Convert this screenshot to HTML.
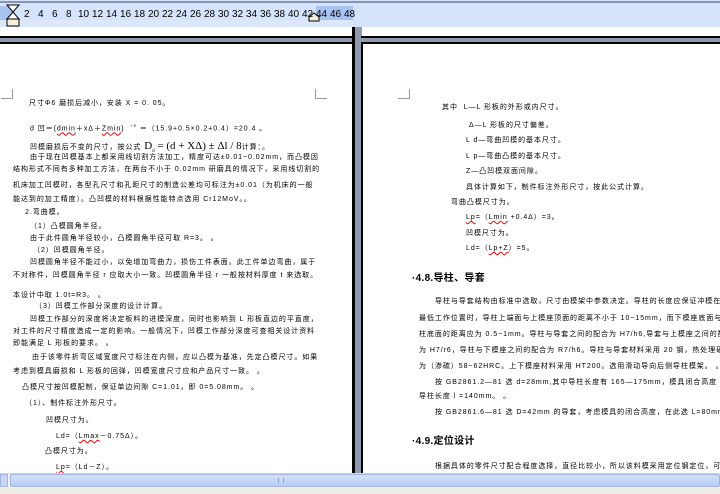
<!DOCTYPE html>
<html><head><meta charset="utf-8"><style>
*{margin:0;padding:0;box-sizing:border-box}
body{width:720px;height:494px;overflow:hidden;background:#8e99b0;position:relative;font-family:"Liberation Sans","Noto Sans CJK SC",sans-serif}
.a{position:absolute}
.t{position:absolute;font-size:7px;line-height:8px;white-space:nowrap;color:#000;font-family:"Liberation Sans","Noto Sans CJK SC",sans-serif;letter-spacing:0.95px}
.h{position:absolute;font-size:10px;font-weight:bold;white-space:nowrap;color:#000;font-family:"Liberation Sans","Noto Sans CJK SC",sans-serif;letter-spacing:0.3px}
.r{position:absolute;top:9px;font-size:10px;color:#000;font-family:"Liberation Sans",sans-serif}
u{text-decoration:underline wavy red;text-decoration-thickness:1px}
</style></head><body>
<!-- top chrome -->
<div class="a" style="left:0;top:0;width:720px;height:27px;background:#d6e4fb"></div>
<div class="a" style="left:0;top:1px;width:720px;height:2px;background:#8795b2"></div>
<div class="a" style="left:0;top:6px;width:12px;height:14px;background:#a9c3f0"></div>
<div class="a" style="left:316px;top:6px;width:37px;height:14px;background:#a9c3f0"></div>
<div class="a" style="left:0;top:20px;width:353px;height:6px;background:#dce7fb"></div>
<svg class="a" style="left:6px;top:4px" width="14" height="24"><path d="M1 1h12L7 8ZM1 15L7 8l6 7Z" fill="#fff" stroke="#000"/><rect x="1" y="15" width="12" height="7" fill="#f3efd8" stroke="#000"/></svg>
<svg class="a" style="left:308px;top:12px" width="12" height="10"><path d="M1 9V5l5-4 5 4v4Z" fill="#f3efd8" stroke="#000"/></svg>
<div class="r" style="left:24px">2</div><div class="r" style="left:38px">4</div><div class="r" style="left:52px">6</div><div class="r" style="left:66px">8</div>
<div class="r" style="left:78px">10</div><div class="r" style="left:92px">12</div><div class="r" style="left:106px">14</div><div class="r" style="left:120px">16</div>
<div class="r" style="left:134px">18</div><div class="r" style="left:148px">20</div><div class="r" style="left:162px">22</div><div class="r" style="left:176px">24</div>
<div class="r" style="left:190px">26</div><div class="r" style="left:204px">28</div><div class="r" style="left:218px">30</div><div class="r" style="left:232px">32</div>
<div class="r" style="left:246px">34</div><div class="r" style="left:260px">36</div><div class="r" style="left:274px">38</div><div class="r" style="left:288px">40</div>
<div class="r" style="left:302px">42</div><div class="r" style="left:316px">44</div><div class="r" style="left:330px">46</div><div class="r" style="left:344px">48</div>
<!-- previous page bottoms -->
<div class="a" style="left:0;top:27px;width:353px;height:9px;background:#fff"></div>
<div class="a" style="left:362px;top:27px;width:358px;height:9px;background:#fff"></div>
<div class="a" style="left:0;top:36px;width:720px;height:2px;background:#000"></div>
<!-- pages -->
<div class="a" style="left:0;top:44px;width:352px;height:429px;background:#fff;overflow:hidden">
<div class="a" style="left:1px;top:45px;width:12px;height:10px;border-right:1px solid #999;border-bottom:1px solid #999"></div>
<div class="a" style="left:315px;top:45px;width:12px;height:10px;border-left:1px solid #999;border-bottom:1px solid #999"></div>
</div>
<div class="a" style="left:363px;top:44px;width:357px;height:429px;background:#fff;overflow:hidden">
<div class="a" style="left:35px;top:45px;width:12px;height:10px;border-right:1px solid #999;border-bottom:1px solid #999"></div>
</div>
<div class="a" style="left:0;top:42px;width:720px;height:2px;background:#000"></div>
<div class="a" style="left:352px;top:27px;width:3px;height:446px;background:#000"></div>
<div class="a" style="left:355px;top:27px;width:6px;height:446px;background:#8e99b0"></div>
<div class="a" style="left:361px;top:42px;width:2px;height:431px;background:#000"></div>

<!-- left page text -->
<div class="t" style="left:29px;top:100px">尺寸Φ6 磨损后减小，安装 X = 0. 05。</div>
<div class="t" style="left:30px;top:122px">d 凹＝(<u>dmin</u>＋xΔ＋<u>Zmin</u>) &nbsp;<sup style="font-size:4px">+δ</sup> ＝（15.9+0.5×0.2+0.4）=20.4 。</div>
<div class="t" style="left:30px;top:142px">凹模磨损后不变的尺寸，按公式 <span style="font-family:'Liberation Serif',serif;font-size:11px;letter-spacing:0">D<sub style="font-size:5px">d</sub> = (d + XΔ) ± Δl / 8</span>计算：。</div>
<div class="t" style="left:30px;top:154px">由于现在凹模基本上都采用线切割方法加工，精度可达±0.01~0.02mm，而凸模因</div>
<div class="t" style="left:13px;top:166px">结构形式不同有多种加工方法，在两台不小于 0.02mm 研磨具的情况下，采用线切割的</div>
<div class="t" style="left:13px;top:182px">机床加工凹模时，各型孔尺寸和孔距尺寸的制造公差均可标注为±0.01（为机床的一般</div>
<div class="t" style="left:13px;top:196px">能达到的加工精度）。凸凹模的材料根据性能特点选用 Cr12MoV。。</div>
<div class="t" style="left:25px;top:209px">2.弯曲模。</div>
<div class="t" style="left:30px;top:223px">（1）凸模圆角半径。</div>
<div class="t" style="left:30px;top:235px">由于此件圆角半径较小，凸模圆角半径可取 R=3。 。</div>
<div class="t" style="left:33px;top:247px">（2）凹模圆角半径。</div>
<div class="t" style="left:30px;top:259px">凹模圆角半径不能过小，以免增加弯曲力，损伤工件表面。此工件单边弯曲，属于</div>
<div class="t" style="left:13px;top:272px">不对称件，凹模圆角半径 r 应取大小一致。凹模圆角半径 r 一般按材料厚度 t 来选取。</div>
<div class="t" style="left:13px;top:292px">本设计中取 1.0t=R3。 。</div>
<div class="t" style="left:35px;top:303px">（3）凹模工作部分深度的设计计算。</div>
<div class="t" style="left:30px;top:316px">凹模工作部分的深度将决定板料的进模深度，同时也影响到 L 形板直边的平直度，</div>
<div class="t" style="left:13px;top:328px">对工件的尺寸精度造成一定的影响。一般情况下，凹模工作部分深度可查相关设计资料</div>
<div class="t" style="left:13px;top:340px">即能满足 L 形板的要求。 。</div>
<div class="t" style="left:32px;top:354px">由于该零件折弯区域宽度尺寸标注在内侧，应以凸模为基准，先定凸模尺寸。如果</div>
<div class="t" style="left:13px;top:368px">考虑到模具磨损和 L 形板的回弹，凹模宽度尺寸应和产品尺寸一致。 。</div>
<div class="t" style="left:22px;top:384px">凸模尺寸按凹模配制，保证单边间隙 C=1.01，即 0=5.08mm。 。</div>
<div class="t" style="left:25px;top:400px">（1）、制件标注外形尺寸。</div>
<div class="t" style="left:46px;top:417px">凹模尺寸为。</div>
<div class="t" style="left:56px;top:433px">Ld=（<u>Lmax</u>－0.75Δ）。</div>
<div class="t" style="left:45px;top:448px">凸模尺寸为。</div>
<div class="t" style="left:56px;top:464px"><u>Lp</u>=（Ld－Z）。</div>

<!-- right page text -->
<div class="a" style="left:363px;top:44px;width:357px;height:429px;overflow:hidden">
<div class="t" style="left:79px;top:60px">其中 &nbsp;L—L 形板的外形或内尺寸。</div>
<div class="t" style="left:106px;top:78px">Δ—L 形板的尺寸偏差。</div>
<div class="t" style="left:103px;top:93px">L d—弯曲凹模的基本尺寸。</div>
<div class="t" style="left:103px;top:109px">L p—弯曲凸模的基本尺寸。</div>
<div class="t" style="left:103px;top:124px">Z—凸凹模双面间隙。</div>
<div class="t" style="left:103px;top:140px">具体计算如下，制件标注外形尺寸，按此公式计算。</div>
<div class="t" style="left:88px;top:155px">弯曲凸模尺寸为。</div>
<div class="t" style="left:103px;top:170px"><u>Lp</u>=（<u>Lmin</u> +0.4Δ）=3。</div>
<div class="t" style="left:103px;top:186px">凹模尺寸为。</div>
<div class="t" style="left:103px;top:201px">Ld=（<u>Lp+Z</u>）=5。</div>
<div class="h" style="left:49px;top:225px">·4.8.导柱、导套</div>
<div class="t" style="left:72px;top:254px">导柱与导套结构由标准中选取，尺寸由模架中参数决定。导柱的长度应保证冲模在</div>
<div class="t" style="left:56px;top:271px">最低工作位置时，导柱上端面与上模座顶面的距离不小于 10~15mm，而下模座底面与导</div>
<div class="t" style="left:56px;top:287px">柱底面的距离应为 0.5~1mm。导柱与导套之间的配合为 H7/h6,导套与上模座之间的配合</div>
<div class="t" style="left:56px;top:303px">为 H7/r6，导柱与下模座之间的配合为 R7/h6。导柱与导套材料采用 20 钢，热处理硬度</div>
<div class="t" style="left:56px;top:319px">为（渗碳）58~62HRC。上下模座材料采用 HT200。选用滑动导向后侧导柱模架。 。</div>
<div class="t" style="left:72px;top:335px">按 GB2861.2—81 选 d=28mm,其中导柱长度有 165—175mm，模具闭合高度 175mm，选</div>
<div class="t" style="left:56px;top:349px">导柱长度 l =140mm。 。</div>
<div class="t" style="left:72px;top:365px">按 GB2861.6—81 选 D=42mm 的导套，考虑模具的闭合高度，在此选 L=80mm。 。</div>
<div class="h" style="left:49px;top:388px">·4.9.定位设计</div>
<div class="t" style="left:72px;top:419px">根据具体的零件尺寸配合程度选择，直径比较小，所以该料模采用定位钢定位，可</div>
</div>

<!-- scrollbar -->
<div class="a" style="left:0;top:473px;width:720px;height:15px;background:#eef3fd;border-top:1px solid #c9d6ee"></div>
<div class="a" style="left:0;top:474px;width:8px;height:13px;background:#c6d6f5;border:1px solid #9fb4de"></div>
<div class="a" style="left:10px;top:474px;width:710px;height:13px;background:linear-gradient(#d3e0fb,#b7ccf5);border:1px solid #9fb4de;border-radius:2px"></div>
<div class="a" style="left:278px;top:478px;width:6px;height:5px;border-left:1px solid #8aa0d0;border-right:1px solid #8aa0d0"></div>
<div class="a" style="left:0;top:488px;width:720px;height:6px;background:#eeede5"></div>
</body></html>
